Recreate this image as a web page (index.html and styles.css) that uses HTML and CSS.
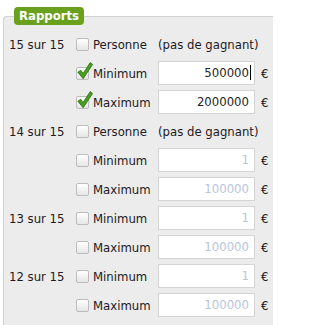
FILE: index.html
```html
<!DOCTYPE html>
<html lang="fr">
<head>
<meta charset="utf-8">
<title>Rapports</title>
<link rel="stylesheet" href="styles.css">
</head>
<body>
<fieldset class="panel">
  <legend class="panel-title">Rapports</legend>
  <div class="grid">
    <span class="rank">15 sur 15</span>
    <span class="box"></span>
    <span class="opt">Personne</span>
    <span class="none">(pas de gagnant)</span>

    <span class="rank"></span>
    <span class="box checked"><svg class="tick" viewBox="0 0 16 18" width="16" height="18"><path d="M0.8 10.2 L3.8 8.2 L6 11.6 L13.2 0.6 L15.6 2.4 L6.2 16.8 Z" fill="#45a020" stroke="#2c7412" stroke-width="0.8" stroke-linejoin="round"/></svg></span>
    <span class="opt">Minimum</span>
    <span class="field on">500000<span class="caret"></span></span>
    <span class="cur">€</span>

    <span class="rank"></span>
    <span class="box checked"><svg class="tick" viewBox="0 0 16 18" width="16" height="18"><path d="M0.8 10.2 L3.8 8.2 L6 11.6 L13.2 0.6 L15.6 2.4 L6.2 16.8 Z" fill="#45a020" stroke="#2c7412" stroke-width="0.8" stroke-linejoin="round"/></svg></span>
    <span class="opt">Maximum</span>
    <span class="field on">2000000</span>
    <span class="cur">€</span>

    <span class="rank">14 sur 15</span>
    <span class="box"></span>
    <span class="opt">Personne</span>
    <span class="none">(pas de gagnant)</span>

    <span class="rank"></span>
    <span class="box"></span>
    <span class="opt">Minimum</span>
    <span class="field">1</span>
    <span class="cur">€</span>

    <span class="rank"></span>
    <span class="box"></span>
    <span class="opt">Maximum</span>
    <span class="field">100000</span>
    <span class="cur">€</span>

    <span class="rank">13 sur 15</span>
    <span class="box"></span>
    <span class="opt">Minimum</span>
    <span class="field">1</span>
    <span class="cur">€</span>

    <span class="rank"></span>
    <span class="box"></span>
    <span class="opt">Maximum</span>
    <span class="field">100000</span>
    <span class="cur">€</span>

    <span class="rank">12 sur 15</span>
    <span class="box"></span>
    <span class="opt">Minimum</span>
    <span class="field">1</span>
    <span class="cur">€</span>

    <span class="rank"></span>
    <span class="box"></span>
    <span class="opt">Maximum</span>
    <span class="field">100000</span>
    <span class="cur">€</span>
  </div>
</fieldset>
</body>
</html>
```

FILE: styles.css
```css
html, body {
  margin: 0;
  padding: 0;
  overflow: hidden;
  background: #ffffff;
}
body {
  font-family: "DejaVu Sans Condensed", "DejaVu Sans", sans-serif;
  font-stretch: condensed;
  font-size: 13px;
  color: #1e1a1e;
  width: 273px;
  height: 325px;
}
.panel {
  margin: 7px 0 0 3px;
  padding: 7px 0 0 5px;
  width: 270px;
  height: 318px;
  border: 1px solid #d2d2d2;
  border-right: none;
  border-bottom: none;
  border-radius: 4px 0 0 0;
  background: #ececec;
  box-sizing: border-box;
  overflow: hidden;
}
.panel-title {
  margin-left: 5px;
  padding: 0 5px;
  height: 18px;
  line-height: 18px;
  background: #69a01e;
  color: #ffffff;
  font-weight: bold;
  font-size: 13px;
  border-radius: 4px;
}
.grid {
  display: grid;
  grid-template-columns: 67px 17px 65px 97px auto;
  grid-auto-rows: 24px;
  row-gap: 5px;
  align-items: center;
}
.rank {
  white-space: nowrap;
}
.box {
  position: relative;
  width: 11px;
  height: 11px;
  border: 1px solid #bcbcbc;
  border-radius: 2px;
  background: linear-gradient(#ffffff, #e6e6e6);
}
.tick {
  position: absolute;
  left: 0px;
  top: -6px;
}
.opt {
  white-space: nowrap;
  color: #221a24;
}
.none {
  grid-column: 4 / span 2;
  white-space: nowrap;
}
.field {
  box-sizing: border-box;
  height: 24px;
  line-height: 22px;
  border: 1px solid #d4d4d4;
  background: #ffffff;
  text-align: right;
  padding-right: 5px;
  color: #b7c6dc;
}
.field.on {
  color: #1e1e1e;
}
.caret {
  display: inline-block;
  width: 1px;
  height: 15px;
  background: #000000;
  vertical-align: -3px;
  margin-right: -2px;
  margin-left: 1px;
}
.cur {
  padding-left: 6px;
}
```
